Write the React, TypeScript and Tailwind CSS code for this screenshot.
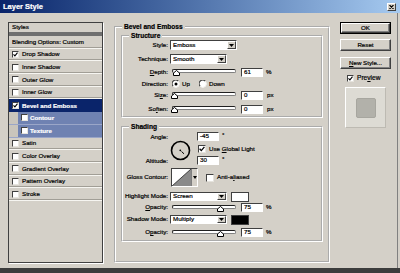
import React from 'react';

const font = "font-['Liberation_Sans',Arial,sans-serif]";

function Check({ on, size = 'w-[7px] h-[7px]' }: { on?: boolean; size?: string }) {
  return (
    <span
      className={`relative inline-block shrink-0 bg-white border border-t-[#404040] border-l-[#404040] border-r-[#e6e4de] border-b-[#e6e4de] ${size}`}
    >
      {on && (
        <svg viewBox="0 0 6 6" className="absolute inset-0 w-full h-full">
          <path d="M0.6 2.8 L2.3 4.6 L5.4 0.8" fill="none" stroke="#000" strokeWidth="1.3" />
        </svg>
      )}
    </span>
  );
}

function Radio({ on }: { on?: boolean }) {
  return (
    <svg width="8" height="8" viewBox="0 0 8 8" className="shrink-0">
      <circle cx="4" cy="4" r="3.4" fill="#fff" />
      <path d="M1.2 6.2 A3.4 3.4 0 0 1 6.2 1.2" fill="none" stroke="#404040" strokeWidth="1.1" />
      <path d="M6.2 1.2 A3.4 3.4 0 0 1 1.2 6.2" fill="none" stroke="#f4f3ef" strokeWidth="1" />
      {on && <circle cx="4" cy="4" r="1.5" fill="#000" />}
    </svg>
  );
}

function Select({ value, w }: { value: string; w: string }) {
  return (
    <div
      className={`flex items-center shrink-0 bg-white border border-t-[#404040] border-l-[#404040] border-r-white border-b-white ${w}`}
    >
      <span className="flex-1 pl-[2px] leading-none">{value}</span>
      <span className="w-[9px] h-full flex items-center justify-center bg-[#d4d0c8] border border-t-white border-l-white border-r-[#404040] border-b-[#404040]">
        <svg width="5" height="3" viewBox="0 0 5 3">
          <path d="M0 0 H5 L2.5 3 Z" fill="#000" />
        </svg>
      </span>
    </div>
  );
}

function Field({ v }: { v: string }) {
  return (
    <div className="w-[22px] h-[9px] shrink-0 flex items-center pl-[2px] leading-none bg-white border border-t-[#404040] border-l-[#404040] border-r-white border-b-white">
      {v}
    </div>
  );
}

function Slider({ thumb }: { thumb: string }) {
  return (
    <div className="relative w-[66px] h-[10px] ml-[2px] shrink-0">
      <div className="absolute left-[2px] right-0 top-[2px] h-[4px] rounded-full bg-white border border-t-[#202020] border-l-[#202020] border-r-[#808080] border-b-[#808080]" />
      <svg className={`absolute top-[3px] ${thumb}`} width="7" height="6" viewBox="0 0 7 6">
        <path d="M3.5 0.5 L6.5 3 V5.5 H0.5 V3 Z" fill="#fff" stroke="#000" strokeWidth="1" />
      </svg>
    </div>
  );
}

function Label({ children }: { children: React.ReactNode }) {
  return <span className="w-[45px] shrink-0 text-right leading-none">{children}</span>;
}

function Button({ children, isDefault }: { children: React.ReactNode; isDefault?: boolean }) {
  const inner = (
    <div className="w-full h-full flex items-center justify-center leading-none bg-[#d4d0c8] border border-t-white border-l-white border-r-[#404040] border-b-[#404040] shadow-[inset_-1px_-1px_0_#808080]">
      {children}
    </div>
  );
  return isDefault ? (
    <div className="w-[51px] h-[12px] border border-black">{inner}</div>
  ) : (
    <div className="w-[51px] h-[12px]">{inner}</div>
  );
}

const styleRows = [
  { name: 'Drop Shadow', on: true },
  { name: 'Inner Shadow' },
  { name: 'Outer Glow' },
  { name: 'Inner Glow' },
];
const laterRows = ['Satin', 'Color Overlay', 'Gradient Overlay', 'Pattern Overlay', 'Stroke'];

const row = 'h-[12.7px] shrink-0 flex items-center border-b border-b-[#f6f5f1] shadow-[inset_0_-1px_0_#a19e96]';

function StylesPanel() {
  return (
    <div className="ml-[8px] mt-[9px] w-[95px] h-[241px] shrink-0 flex flex-col bg-[#d4d0c8] border border-[#404040] shadow-[1px_1px_0_#fff]">
      <div className="h-[9px] shrink-0 flex items-center pl-[3px] leading-none">Styles</div>
      <div className="h-[4px] shrink-0 bg-[#6f6f6f]" />
      <div className={`${row} pl-[3px]`}>Blending Options: Custom</div>
      {styleRows.map((r) => (
        <div key={r.name} className={`${row} pl-[3px] gap-[3px]`}>
          <Check on={r.on} />
          <span className="leading-none">{r.name}</span>
        </div>
      ))}
      <div className="h-[12.7px] shrink-0 flex items-center pl-[3px] gap-[3px] bg-[#0a246a] text-white font-bold">
        <Check on />
        <span className="leading-none">Bevel and Emboss</span>
      </div>
      {['Contour', 'Texture'].map((n) => (
        <div key={n} className="h-[12.7px] shrink-0 flex border-b border-b-[#9aa6c8]">
          <div className="w-[9px] shrink-0 bg-[#c9c5bc]" />
          <div className="flex-1 flex items-center pl-[3px] gap-[2px] bg-[#6f82b2] text-white font-bold">
            <Check />
            <span className="leading-none">{n}</span>
          </div>
        </div>
      ))}
      {laterRows.map((n) => (
        <div key={n} className={`${row} pl-[3px] gap-[3px]`}>
          <Check />
          <span className="leading-none">{n}</span>
        </div>
      ))}
    </div>
  );
}

const legend = 'ml-[6px] px-[2px] font-bold text-[6.6px] leading-[9px]';
const frame = 'border-2 border-white [border-style:groove]';

function Structure() {
  return (
    <fieldset className={`${frame} w-[202px] pb-[2px]`}>
      <legend className={legend}>Structure</legend>
      <div className="flex items-center h-[10px]">
        <Label>Style:</Label>
        <div className="ml-[2px]">
          <Select value="Emboss" w="w-[67px] h-[10px]" />
        </div>
      </div>
      <div className="flex items-center h-[10px] mt-[4px]">
        <Label>Technique:</Label>
        <div className="ml-[2px]">
          <Select value="Smooth" w="w-[57px] h-[10px]" />
        </div>
      </div>
      <div className="flex items-center h-[10px] mt-[3px]">
        <Label>
          <u>D</u>epth:
        </Label>
        <Slider thumb="left-[3px]" />
        <div className="ml-[5px]">
          <Field v="61" />
        </div>
        <span className="ml-[3px] leading-none">%</span>
      </div>
      <div className="flex items-center h-[8px] mt-[3px]">
        <Label>Direction:</Label>
        <span className="ml-[4px] flex items-center gap-[2px]">
          <Radio on />
          <span className="leading-none">Up</span>
        </span>
        <span className="ml-[9px] flex items-center gap-[2px]">
          <Radio />
          <span className="leading-none">Down</span>
        </span>
      </div>
      <div className="flex items-center h-[10px] mt-[2px]">
        <Label>
          Si<u>z</u>e:
        </Label>
        <Slider thumb="left-[1px]" />
        <div className="ml-[5px]">
          <Field v="0" />
        </div>
        <span className="ml-[4px] leading-none">px</span>
      </div>
      <div className="flex items-center h-[10px] mt-[4px]">
        <Label>
          So<u>f</u>ten:
        </Label>
        <Slider thumb="left-[1px]" />
        <div className="ml-[5px]">
          <Field v="0" />
        </div>
        <span className="ml-[4px] leading-none">px</span>
      </div>
    </fieldset>
  );
}

function Shading() {
  return (
    <fieldset className={`${frame} w-[202px] mt-[4px] pt-[1px] pb-[3px]`}>
      <legend className={legend}>Shading</legend>
      <div className="flex h-[34px]">
        <div className="w-[45px] shrink-0 flex flex-col justify-between text-right">
          <span className="h-[10px] flex items-center justify-end leading-none">Angle:</span>
          <span className="h-[10px] flex items-center justify-end leading-none">Altitude:</span>
        </div>
        <div className="ml-[2px] w-[21px] flex items-center pt-[2px]">
          <svg width="21" height="21" viewBox="0 0 21 21">
            <circle cx="10.5" cy="10.5" r="9" fill="none" stroke="#000" strokeWidth="1.6" />
            <circle cx="10.3" cy="10.3" r="0.9" fill="#000" />
            <path d="M11.5 11.5 L14 13.8" stroke="#000" strokeWidth="1" />
          </svg>
        </div>
        <div className="ml-[6px] flex flex-col">
          <div className="flex items-start h-[9px]">
            <Field v="-45" />
            <span className="ml-[3px] leading-none">°</span>
          </div>
          <div className="flex items-center h-[8px] mt-[4px] ml-[1px] gap-[3px]">
            <Check on size="w-[8px] h-[8px]" />
            <span className="leading-none">
              Use <u>G</u>lobal Light
            </span>
          </div>
          <div className="flex items-start h-[9px] mt-[3px]">
            <Field v="30" />
            <span className="ml-[3px] leading-none">°</span>
          </div>
        </div>
      </div>
      <div className="flex items-center h-[19px] mt-[2px]">
        <Label>Gloss Contour:</Label>
        <div className="ml-[3px] h-[19px] flex border border-t-[#404040] border-l-[#404040] border-r-white border-b-white">
          <svg width="19" height="17" viewBox="0 0 19 17" className="bg-white">
            <path d="M0 17 L19 0 V17 Z" fill="#8a8a8a" />
            <path d="M0 17 L19 0" stroke="#222" strokeWidth="0.8" />
          </svg>
          <div className="w-[6px] flex items-center justify-center bg-[#d4d0c8] border-l border-l-[#808080]">
            <svg width="4" height="3" viewBox="0 0 4 3">
              <path d="M0 0 H4 L2 3 Z" fill="#000" />
            </svg>
          </div>
        </div>
        <span className="ml-[8px] flex items-center gap-[3px]">
          <Check size="w-[8px] h-[8px]" />
          <span className="leading-none">
            Anti-a<u>l</u>iased
          </span>
        </span>
      </div>
      <div className="flex items-center h-[9px] mt-[5px]">
        <Label>Highlight Mode:</Label>
        <div className="ml-[2px]">
          <Select value="Screen" w="w-[57px] h-[9px]" />
        </div>
        <div className="ml-[4px] w-[18px] h-[10px] bg-white border border-[#404040]" />
      </div>
      <div className="flex items-center h-[9px] mt-[2px]">
        <Label>
          <u>O</u>pacity:
        </Label>
        <Slider thumb="left-[47px]" />
        <div className="ml-[5px]">
          <Field v="75" />
        </div>
        <span className="ml-[3px] leading-none">%</span>
      </div>
      <div className="flex items-center h-[9px] mt-[3px]">
        <Label>Shadow Mode:</Label>
        <div className="ml-[2px]">
          <Select value="Multiply" w="w-[57px] h-[9px]" />
        </div>
        <div className="ml-[4px] w-[18px] h-[10px] bg-black border border-[#404040]" />
      </div>
      <div className="flex items-center h-[9px] mt-[4px]">
        <Label>
          O<u>p</u>acity:
        </Label>
        <Slider thumb="left-[47px]" />
        <div className="ml-[5px]">
          <Field v="75" />
        </div>
        <span className="ml-[3px] leading-none">%</span>
      </div>
    </fieldset>
  );
}

export default function App() {
  return (
    <div
      className={`w-[400px] h-[273px] bg-[#d4d0c8] flex flex-col overflow-hidden text-black text-[6.2px] [-webkit-text-stroke:0.2px] ${font}`}
    >
      <div className="h-[13px] shrink-0 flex items-center pl-[3px] pr-[4px] bg-linear-to-r from-[#0a246a] to-[#a6caf0]">
        <span className="flex-1 text-white font-bold text-[7.5px] leading-none">Layer Style</span>
        <span className="w-[9px] h-[8px] flex items-center justify-center bg-[#d4d0c8] border border-t-white border-l-white border-r-[#404040] border-b-[#404040]">
          <svg width="5" height="4" viewBox="0 0 5 4">
            <path d="M0.5 0 L4.5 4 M4.5 0 L0.5 4" stroke="#000" strokeWidth="1.1" />
          </svg>
        </span>
      </div>
      <div className="flex flex-1 items-start mr-[2px] border-r border-r-[#808080]">
        <StylesPanel />
        <fieldset className={`${frame} ml-[11px] mt-[9px] w-[216px] h-[241px] px-[5px] shrink-0`}>
          <legend className="ml-[1px] px-[2px] font-bold text-[6.6px] leading-[9px]">Bevel and Emboss</legend>
          <Structure />
          <Shading />
        </fieldset>
        <div className="ml-[10px] mt-[9px] flex flex-col">
          <Button isDefault>OK</Button>
          <div className="mt-[5px]">
            <Button>Reset</Button>
          </div>
          <div className="mt-[6px]">
            <Button>
              <u>N</u>ew Style...
            </Button>
          </div>
          <div className="mt-[6px] ml-[7px] flex items-center gap-[3px] h-[7px]">
            <Check on />
            <span className="leading-none text-[6.6px]">
              Pre<u>v</u>iew
            </span>
          </div>
          <div className="mt-[5px] ml-[5px] w-[41px] h-[41px] flex items-center justify-center bg-[#dddbd4] border border-t-white border-l-white border-r-[#bdbab2] border-b-[#bdbab2]">
            <div className="w-[20px] h-[20px] rounded-[2px] bg-[#b2b1aa] border border-[#a7a69f]" />
          </div>
        </div>
      </div>
      <div className="h-[5px] shrink-0 bg-[#3c3c3c]" />
    </div>
  );
}
